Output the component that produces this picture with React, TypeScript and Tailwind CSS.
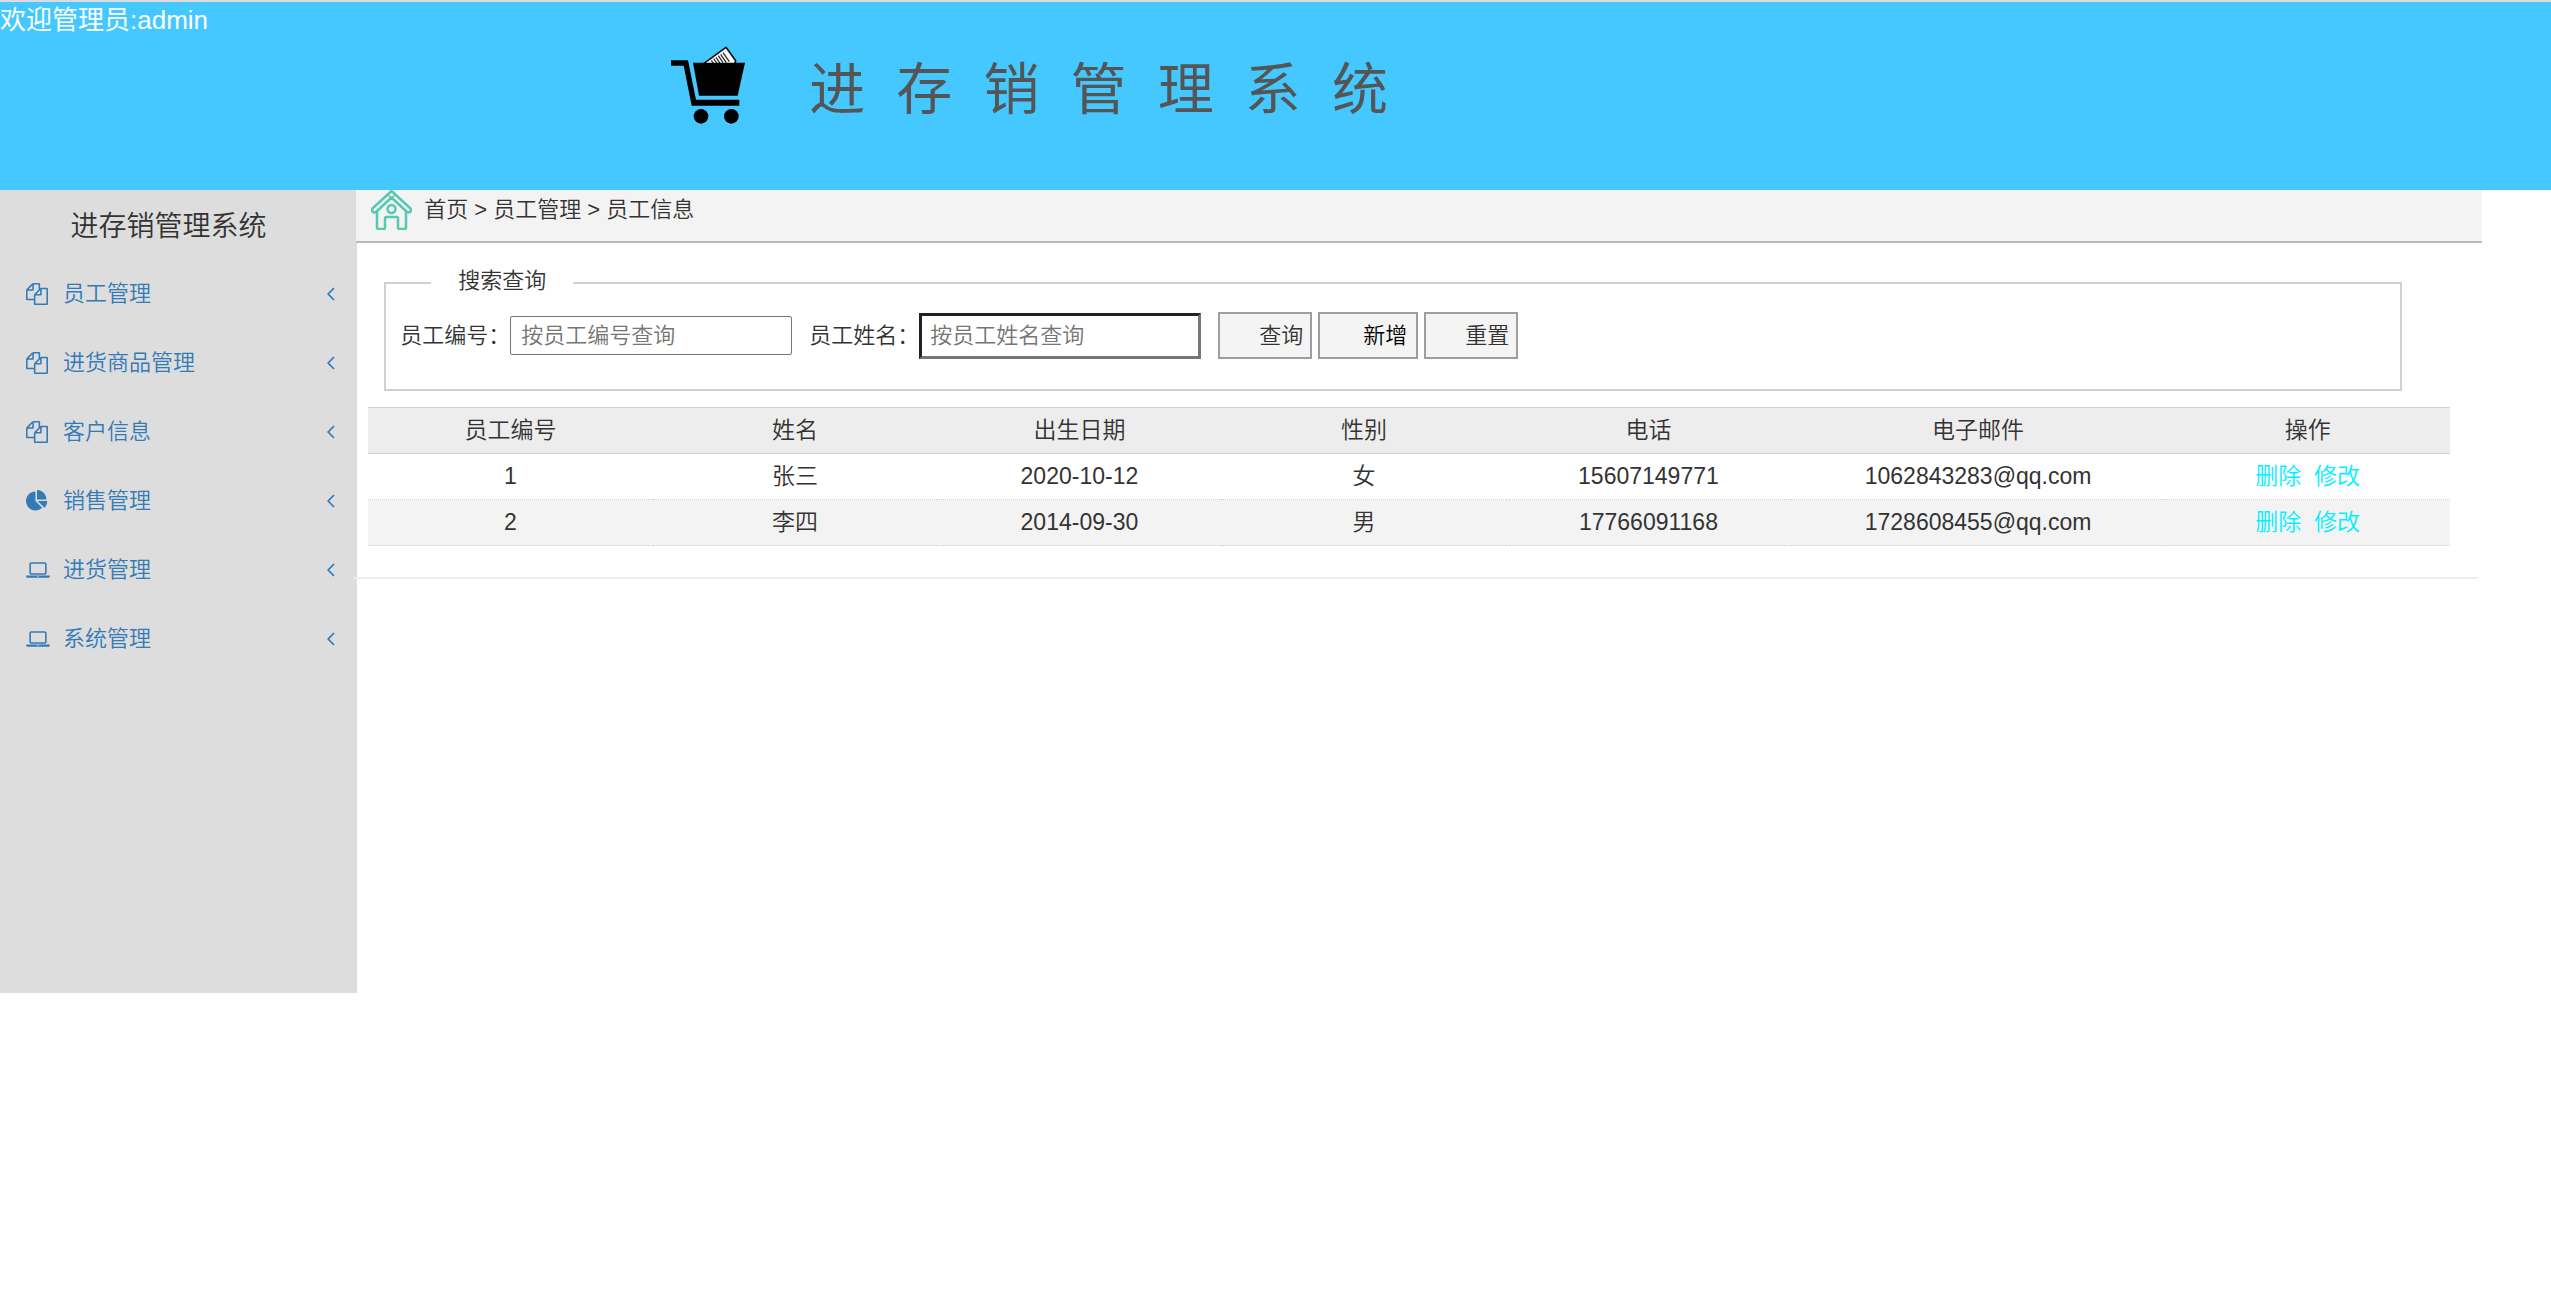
import { useState } from 'react';
import type { ReactNode } from 'react';

const CopyIcon = () => (
  <svg viewBox="0 0 1792 1792" className="h-[22px] w-[22px] fill-current" aria-hidden="true">
    <path d="M1696 384q40 0 68 28t28 68v1216q0 40-28 68t-68 28h-960q-40 0-68-28t-28-68v-288h-544q-40 0-68-28t-28-68v-672q0-40 20-88t48-76l408-408q28-28 76-48t88-20h416q40 0 68 28t28 68v328q68-40 128-40h416zm-544 213l-299 299h299v-299zm-640-384l-299 299h299v-299zm196 647l316-316v-416h-384v416q0 40-28 68t-68 28h-416v640h512v-256q0-40 20-88t48-76zm956 804v-1152h-384v416q0 40-28 68t-68 28h-416v640h896z" />
  </svg>
);

const PieIcon = () => (
  <svg viewBox="0 0 1792 1792" className="h-[22px] w-[22px] fill-current" aria-hidden="true">
    <path d="M768 890l546 546q-106 108-247.500 168t-298.500 60q-209 0-385.500-103t-279.500-279.500-103-385.500 103-385.500 279.500-279.500 385.500-103v762zm187 6h773q0 157-60 298.500t-168 247.500zm709-128h-768v-768q209 0 385.500 103t279.500 279.500 103 385.500z" />
  </svg>
);

const LaptopIcon = () => (
  <svg viewBox="0 0 1920 1792" className="h-[22px] w-6 fill-current" aria-hidden="true">
    <path d="M416 1280q-66 0-113-47t-47-113v-704q0-66 47-113t113-47h1088q66 0 113 47t47 113v704q0 66-47 113t-113 47h-1088zm-32-864v704q0 13 9.500 22.500t22.500 9.500h1088q13 0 22.500-9.500t9.500-22.500v-704q0-13-9.500-22.500t-22.500-9.500h-1088q-13 0-22.500 9.500t-9.500 22.500zm1376 928h160v96q0 40-47 68t-113 28h-1600q-66 0-113-28t-47-68v-96h1760zm-720 96q16 0 16-16t-16-16h-160q-16 0-16 16t16 16h160z" />
  </svg>
);

const AngleLeft = () => (
  <svg viewBox="0 0 8 14" className="h-[14px] w-2 fill-none stroke-current" strokeWidth="1.7" aria-hidden="true">
    <path d="M7 1L1.200 7L7 13" />
  </svg>
);

const CartLogo = () => (
  <svg viewBox="0 0 222 232" className="h-[78px] w-[74px]" aria-hidden="true">
    <path d="M98 52L165 3L194 43L190 56z" fill="#fff" stroke="#111" strokeWidth="5" strokeLinejoin="round" />
    <path
      d="M121 42l8 12M128 37l11 16M135 33l12 18M142 28l14 21M149 24l17 25M156 19l19 27"
      stroke="#222"
      strokeWidth="3.500"
    />
    <path d="M66 49H222L200 148H84z" />
    <path d="M0 42H51L75 160H205V178H62L38 58H0z" />
    <circle cx="90" cy="210" r="22" />
    <circle cx="181" cy="210" r="22" />
  </svg>
);

const HomeIcon = () => (
  <svg
    viewBox="0 0 41 40"
    className="h-10 w-[41px] fill-none stroke-[#56c9b0]"
    strokeWidth="2.500"
    strokeLinejoin="round"
    aria-hidden="true"
  >
    <path d="M20.500 1L1.500 18.500Q0.500 20 1.500 21.500Q3.500 23.500 5.500 21.500L20.500 7.500L35.500 21.500Q37.500 23.500 39.500 21.500Q40.500 20 39.500 18.500z" />
    <path d="M16.500 4.500L24 11M24.500 4.500L17 11" strokeWidth="1.500" />
    <circle cx="20.500" cy="19" r="4" />
    <path d="M6 22V37.500Q6 39 7.500 39H12.500Q14 39 14 37.500V28.500Q14 27 15.500 27H25.500Q27 27 27 28.500V37.500Q27 39 28.500 39H33.500Q35 39 35 37.500V22" />
  </svg>
);

const menu: { label: string; icon: ReactNode }[] = [
  { label: '员工管理', icon: <CopyIcon /> },
  { label: '进货商品管理', icon: <CopyIcon /> },
  { label: '客户信息', icon: <CopyIcon /> },
  { label: '销售管理', icon: <PieIcon /> },
  { label: '进货管理', icon: <LaptopIcon /> },
  { label: '系统管理', icon: <LaptopIcon /> },
];

const columns = ['员工编号', '姓名', '出生日期', '性别', '电话', '电子邮件', '操作'];

const employees = [
  { id: 1, name: '张三', birthday: '2020-10-12', sex: '女', phone: '15607149771', email: '1062843283@qq.com' },
  { id: 2, name: '李四', birthday: '2014-09-30', sex: '男', phone: '17766091168', email: '1728608455@qq.com' },
];

const Header = () => (
  <header className="h-[190px] border-t-2 border-[#dcdcdc] bg-[#44c8ff] font-normal">
    <p className="h-9 text-[26px] leading-9 text-white">欢迎管理员:admin</p>
    <div className="flex items-start pl-[26%]">
      <div className="ml-2 mt-2">
        <CartLogo />
      </div>
      <h1 className="ml-16 mt-3 whitespace-nowrap text-[56px] leading-[80px] text-[#555]">
        进&nbsp;&nbsp;存&nbsp;&nbsp;销&nbsp;&nbsp;管&nbsp;&nbsp;理&nbsp;&nbsp;系&nbsp;&nbsp;统
      </h1>
    </div>
  </header>
);

const Sidebar = () => (
  <nav className="w-[14%] shrink-0 bg-[#ddd] pb-80">
    <h2 className="pr-5 pt-1 text-center text-[28px] leading-[65px]">进存销管理系统</h2>
    <ul>
      {menu.map(item => (
        <li key={item.label}>
          <a href="#" className="flex h-[69px] items-center pl-[26px] pr-[22px] text-[#337ab7]">
            <span className="w-[37px]">{item.icon}</span>
            <span className="grow">{item.label}</span>
            <AngleLeft />
          </a>
        </li>
      ))}
    </ul>
  </nav>
);

const Breadcrumb = () => (
  <div className="flex h-[53px] items-start border-b-2 border-[#b9b9b9] bg-[#f3f3f3] pl-[15px]">
    <HomeIcon />
    <p className="ml-3 leading-10">首页 &gt; 员工管理 &gt; 员工信息</p>
  </div>
);

const SearchForm = () => {
  const [id, setId] = useState('');
  const [name, setName] = useState('');

  const reset = () => {
    setId('');
    setName('');
  };

  return (
    <form onSubmit={e => e.preventDefault()}>
      <fieldset className="ml-7 mr-20 mt-[22px] border-2 border-[#d0d0d0] pb-[30px] pl-[14px]">
        <legend className="ml-[31px] px-[27px] pb-1 leading-8">搜索查询</legend>
        <div className="flex flex-wrap items-center pt-[11px]">
          <label htmlFor="emp-id">员工编号：</label>
          <input
            id="emp-id"
            value={id}
            onChange={e => setId(e.target.value)}
            placeholder="按员工编号查询"
            className="mr-[17px] h-[39px] w-[282px] rounded-xs border border-[#767676] px-[10px] placeholder:text-[#757575]"
          />
          <label htmlFor="emp-name">员工姓名：</label>
          <input
            id="emp-name"
            value={name}
            onChange={e => setName(e.target.value)}
            placeholder="按员工姓名查询"
            className="mr-[17px] h-[46px] w-[282px] border-[3px] border-b-[#767676] border-l-[#222] border-r-[#767676] border-t-[#222] px-2 placeholder:text-[#757575]"
          />
          <div className="flex gap-[6px]">
            <button type="submit" className="h-[47px] w-[94px] border-2 border-[#9e9e9e] bg-[#f4f4f4] pr-[7px] text-right">
              查询
            </button>
            <button type="button" className="h-[47px] w-[100px] border-2 border-[#9e9e9e] bg-[#f4f4f4] pr-[9px] text-right text-black">
              新增
            </button>
            <button
              type="button"
              onClick={reset}
              className="h-[47px] w-[94px] border-2 border-[#9e9e9e] bg-[#f4f4f4] pr-[7px] text-right"
            >
              重置
            </button>
          </div>
        </div>
      </fieldset>
    </form>
  );
};

const EmployeeTable = () => (
  <div className="ml-3 mr-8 mt-4">
    <table className="w-full table-fixed border-collapse text-center text-[23px]">
      <thead>
        <tr className="h-[46px] border-y border-[#cfcfcf] bg-[#ededed]">
          {columns.map(col => (
            <th key={col} className={col === '电子邮件' ? 'w-[18%] pb-0.5 font-[350]' : 'pb-0.5 font-[350]'}>
              {col}
            </th>
          ))}
        </tr>
      </thead>
      <tbody>
        {employees.map(emp => (
          <tr key={emp.id} className="h-[46px] border-b border-dotted border-[#cfcfcf] even:bg-[#f3f3f3] *:pb-0.5">
            <td>{emp.id}</td>
            <td>{emp.name}</td>
            <td>{emp.birthday}</td>
            <td>{emp.sex}</td>
            <td>{emp.phone}</td>
            <td>{emp.email}</td>
            <td className="text-[#00f0ff]">
              <a href="#">删除</a>&nbsp; <a href="#">修改</a>
            </td>
          </tr>
        ))}
      </tbody>
    </table>
  </div>
);

export default function App() {
  return (
    <div className="bg-white font-['Liberation_Sans','Noto_Sans_CJK_SC',sans-serif] text-[22px] font-[350] leading-8 text-[#333]">
      <Header />
      <div className="flex items-start">
        <Sidebar />
        <main className="-ml-px w-5/6">
          <Breadcrumb />
          <SearchForm />
          <EmployeeTable />
          <hr className="-ml-[3px] mr-1 mt-[31px] border-t-2 border-[#eee]" />
        </main>
      </div>
    </div>
  );
}
